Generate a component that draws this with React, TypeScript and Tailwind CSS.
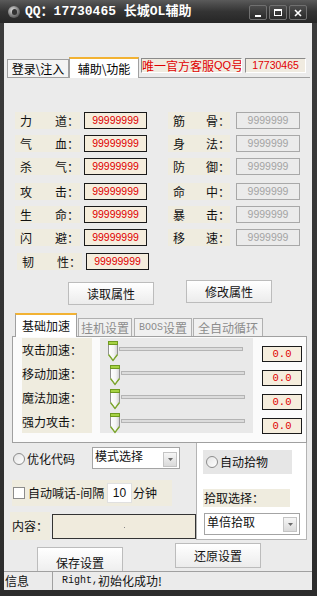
import React from "react";

const CJK = "font-['Noto_Sans_CJK_SC',sans-serif]";
const NUM = "font-['Liberation_Sans',sans-serif]";
const MONO = "font-['Liberation_Mono','Noto_Sans_CJK_SC',monospace]";

function WinBtn({ children }: { children: React.ReactNode }) {
  return (
    <div className="w-[18px] h-[15px] rounded-[2px] border border-[#707070] bg-linear-to-b from-[#4c4c4c] to-[#2a2a2a] flex items-center justify-center">
      {children}
    </div>
  );
}

const leftRows = [
  { a: "力", b: "道", cls: "" },
  { a: "气", b: "血", cls: "mt-[6px]" },
  { a: "杀", b: "气", cls: "mt-[6px]" },
  { a: "攻", b: "击", cls: "mt-[8px]" },
  { a: "生", b: "命", cls: "mt-[6px]" },
  { a: "闪", b: "避", cls: "mt-[6px]" },
  { a: "韧", b: "性", cls: "mt-[7px] ml-[2px]" },
];
const rightRows = [
  { a: "筋", b: "骨", cls: "" },
  { a: "身", b: "法", cls: "mt-[6px]" },
  { a: "防", b: "御", cls: "mt-[6px]" },
  { a: "命", b: "中", cls: "mt-[8px]" },
  { a: "暴", b: "击", cls: "mt-[6px]" },
  { a: "移", b: "速", cls: "mt-[6px]" },
];

function Thumb() {
  return (
    <svg width="12" height="22" viewBox="0 0 12 22" className="shrink-0">
      <defs>
        <linearGradient id="thf" x1="0" x2="1" y1="0" y2="0">
          <stop offset="0" stopColor="#ffffff" />
          <stop offset="0.6" stopColor="#f4f4f4" />
          <stop offset="1" stopColor="#cfcfcf" />
        </linearGradient>
      </defs>
      <path d="M1.5 1.5 H10.5 V14.5 L6 20.5 L1.5 14.5 Z" fill="url(#thf)" stroke="#909090" />
      <path d="M1.5 14.5 L6 20.5 L10.5 14.5" fill="none" stroke="#7da82c" strokeWidth="1.3" />
      <rect x="1.5" y="1.5" width="9" height="3" fill="#a6d243" stroke="#6f9a20" />
    </svg>
  );
}

function Arrow() {
  return (
    <div className="w-[14px] h-[15px] border border-[#c4c4c4] bg-linear-to-b from-[#f6f6f6] to-[#dadada] flex items-center justify-center">
      <svg width="5" height="3" viewBox="0 0 5 3">
        <path d="M0 0 H5 L2.5 3 Z" fill="#6a6a6a" />
      </svg>
    </div>
  );
}

function Radio() {
  return (
    <div className="w-[12px] h-[12px] rounded-full border border-[#8c8c8c] bg-linear-to-br from-[#e4e4e4] to-white shrink-0" />
  );
}

function Button({ text, cls }: { text: string; cls: string }) {
  return (
    <div
      className={`${cls} w-[86px] border border-[#bcbcbc] bg-linear-to-b from-white to-[#ececec] flex items-center justify-center text-[12px] text-[#111] ${CJK}`}
    >
      {text}
    </div>
  );
}

export default function App() {
  return (
    <div className={`w-[317px] h-[596px] bg-linear-to-b from-[#3c3c3c] to-[#2c2c2c] flex flex-col overflow-hidden ${CJK}`}>
      {/* title bar */}
      <div className="h-[23px] flex items-center pl-[8px] pr-[10px] bg-linear-to-b from-[#5a5a5a] via-[#343434] to-[#262626] shrink-0">
        <div className="w-[12px] h-[12px] rounded-full bg-[radial-gradient(circle_at_40%_35%,#e0e0e0,#8a8a8a_45%,#2a2a2a)] flex items-center justify-center">
          <div className="w-[5px] h-[6px] rounded-full bg-[#333]" />
        </div>
        <span className={`ml-[5px] text-white font-bold text-[13px] leading-none whitespace-nowrap ${MONO}`}>
          QQ：17730465 长城OL辅助
        </span>
        <div className="ml-auto flex gap-[2px] mt-[2px]">
          <WinBtn>
            <div className="w-[6px] h-[2px] bg-white mt-[6px]" />
          </WinBtn>
          <WinBtn>
            <div className="w-[8px] h-[7px] border border-white border-t-2" />
          </WinBtn>
          <WinBtn>
            <svg width="8" height="8" viewBox="0 0 8 8">
              <path d="M1 1 L7 7 M7 1 L1 7" stroke="white" strokeWidth="1.6" />
            </svg>
          </WinBtn>
        </div>
      </div>

      {/* body */}
      <div className="ml-[4px] w-[308px] h-[567px] bg-[#ebebeb] flex flex-col pt-[34px] shrink-0">
        {/* tabs */}
        <div className="h-[20px] flex items-end ml-[3px] text-[12px] leading-none">
          <div className="w-[62px] h-[18px] border border-b-0 border-[#a0a0a0] bg-[#f4f4f4] flex items-center justify-center">
            登录\注入
          </div>
          <div className="relative z-10 -mb-px w-[70px] h-[21px] border-x border-[#a0a0a0] border-t-2 border-t-[#f2b233] bg-white flex items-center justify-center">
            辅助\功能
          </div>
          <div className="self-start mt-[1px] ml-[2px] w-[101px] h-[15px] border border-t-[#8a8a8a] border-l-[#8a8a8a] border-b-white border-r-white bg-[#f0ebe0] text-[#e00000] flex items-center whitespace-nowrap overflow-hidden">
            唯一官方客服<span className={`text-[11px] ${NUM}`}>QQ</span>号
          </div>
          <div className={`self-start mt-[1px] ml-[3px] w-[61px] h-[15px] border border-t-[#8a8a8a] border-l-[#8a8a8a] border-b-white border-r-white bg-[#f0ebe0] text-[#e00000] text-[10.5px] flex items-center justify-center ${NUM}`}>
            17730465
          </div>
        </div>

        {/* main panel */}
        <div className="ml-[3px] w-[303px] h-[494px] border-t border-[#a0a0a0] flex flex-col">
          {/* attributes */}
          <div className="mt-[34px] h-[158px] flex">
            <div className="ml-[8px] w-[153px] flex flex-col">
              {leftRows.map((r, i) => (
                <div key={i} className={`${r.cls} flex items-center h-[17px]`}>
                  <div className="w-[65px] h-[17px] bg-[#efecdf] flex items-center text-[12px] leading-none text-[#111]">
                    <span className="w-[40px] pl-[5px]">{r.a}</span>
                    <span>{r.b}</span>
                    <span>：</span>
                  </div>
                  <div className={`ml-[4px] w-[63px] h-[17px] border border-[#1a1a1a] bg-[#f5eddd] text-[#e00000] text-[10.5px] leading-none flex items-center justify-center ${NUM}`}>
                    99999999
                  </div>
                </div>
              ))}
            </div>
            <div className="w-[140px] flex flex-col">
              {rightRows.map((r, i) => (
                <div key={i} className={`${r.cls} flex items-center h-[17px]`}>
                  <div className="w-[62px] h-[17px] bg-[#efecdf] flex items-center text-[12px] leading-none text-[#111]">
                    <span className="w-[40px] pl-[5px]">{r.a}</span>
                    <span>{r.b}</span>
                    <span>：</span>
                  </div>
                  <div className={`ml-[6px] w-[64px] h-[17px] border border-[#a8a8a8] bg-[#ebebeb] text-[#a4a4a4] text-[10.5px] leading-none flex items-center justify-center ${NUM}`}>
                    9999999
                  </div>
                </div>
              ))}
            </div>
          </div>

          {/* buttons */}
          <div className="mt-[10px] h-[25px] flex items-start">
            <Button text="读取属性" cls="ml-[61px] mt-[2px] h-[23px] w-[80px]" />
            <Button text="修改属性" cls="ml-[32px] h-[23px] w-[80px]" />
          </div>

          {/* sub tabs */}
          <div className="mt-[8px] h-[23px] ml-[8px] flex items-end text-[12px] leading-none">
            <div className="relative z-10 -mb-px w-[62px] h-[24px] border-x border-[#a0a0a0] border-t-2 border-t-[#f2b233] bg-white flex items-center justify-center text-[#111]">
              基础加速
            </div>
            <div className="ml-[1px] w-[54px] h-[18px] border border-b-0 border-[#b0b0b0] bg-[#f0f0f0] flex items-center justify-center text-[#8c8c8c]">
              挂机设置
            </div>
            <div className="ml-[2px] w-[58px] h-[18px] border border-b-0 border-[#b0b0b0] bg-[#f0f0f0] flex items-center justify-center text-[#8c8c8c]">
              <span className={`text-[10px] ${MONO}`}>BOOS</span>设置
            </div>
            <div className="ml-[1px] w-[70px] h-[18px] border border-b-0 border-[#b0b0b0] bg-[#f0f0f0] flex items-center justify-center text-[#8c8c8c]">
              全自动循环
            </div>
          </div>

          {/* sub panel */}
          <div className="ml-[5px] w-[295px] h-[107px] border border-[#a0a0a0] bg-[#fbfbfb] pt-[1px] flex">
            <div className="ml-[9px] w-[70px] h-[95px] bg-[#efecdf] flex flex-col pt-[4px] gap-[8px] text-[12px] leading-[16px] text-[#111]">
              {["攻击加速：", "移动加速：", "魔法加速：", "强力攻击："].map((t) => (
                <div key={t} className="h-[16px]">{t}</div>
              ))}
            </div>
            <div className="ml-[8px] w-[153px] h-[95px] bg-[#e9e9e9] flex flex-col pt-[2px] gap-[2px]">
              {[0, 1, 2, 3].map((i) => (
                <div key={i} className={`h-[22px] flex items-start ${i === 0 ? "ml-[7px]" : "ml-[9px]"}`}>
                  <Thumb />
                  <div className="mt-[7px] h-[4px] w-[124px] border border-[#b4b4b4] bg-[#dcdcdc]" />
                </div>
              ))}
            </div>
            <div className="ml-[9px] w-[40px] flex flex-col pt-[8px] gap-[8px]">
              {[0, 1, 2, 3].map((i) => (
                <div key={i} className={`h-[16px] border border-[#1a1a1a] bg-[#f5eddd] text-[#e00000] text-[10.5px] leading-none flex items-center justify-center ${MONO}`}>
                  0.0
                </div>
              ))}
            </div>
          </div>

          {/* bottom */}
          <div className="h-[97px] flex">
            <div className="w-[189px] flex flex-col text-[12px] leading-none text-[#111]">
              <div className="mt-[4px] h-[22px] flex items-center">
                <div className="ml-[6px] w-[79px] flex items-center mt-[2px]">
                  <Radio />
                  <span className="ml-[2px]">优化代码</span>
                </div>
                <div className="w-[88px] h-[22px] border border-[#a4a4a4] bg-white flex items-start">
                  <span className="ml-[2px] mt-[2px]">模式选择</span>
                  <div className="ml-auto mr-[2px] mt-[4px]">
                    <Arrow />
                  </div>
                </div>
              </div>
              <div className="mt-[11px] ml-[5px] w-[160px] h-[26px] bg-[#efecdf] flex items-center">
                <div className="ml-[1px] w-[12px] h-[12px] border border-[#8c8c8c] bg-white" />
                <span className="ml-[3px] w-[79px]">自动喊话-间隔</span>
                <div className={`w-[25px] h-[20px] bg-white border border-[#e0e0e0] flex items-center justify-center text-[12px] ${NUM}`}>
                  10
                </div>
                <span className="ml-[1px]">分钟</span>
              </div>
              <div className="mt-[6px] h-[28px] flex items-center">
                <div className="ml-[3px] w-[40px] h-[28px] bg-[#efecdf] flex items-center pl-[2px]">内容：</div>
                <div className="ml-[2px] w-[144px] h-[25px] border border-[#333] bg-[#f0ebdd] flex items-center justify-center">
                  <div className="w-[1px] h-[1px] bg-[#888] mt-[3px]" />
                </div>
              </div>
            </div>
            <div className="w-[111px] h-[97px] border border-t-0 border-[#b4b4b4] bg-white flex flex-col text-[12px] leading-none text-[#111]">
              <div className="mt-[7px] ml-[6px] w-[89px] h-[24px] bg-[#e6e6e6] flex items-center">
                <div className="ml-[3px]">
                  <Radio />
                </div>
                <span className="ml-[2px]">自动拾物</span>
              </div>
              <div className="mt-[15px] ml-[6px] w-[87px] h-[18px] bg-[#efecdf] flex items-center pl-[1px]">
                拾取选择：
              </div>
              <div className="mt-[6px] ml-[7px] w-[96px] h-[22px] border border-[#a4a4a4] bg-white flex items-start">
                <span className="ml-[2px] mt-[2px]">单倍拾取</span>
                <div className="ml-auto mr-[2px] mt-[3px]">
                  <Arrow />
                </div>
              </div>
            </div>
          </div>

          {/* action buttons */}
          <div className="h-[31px] overflow-hidden flex items-start">
            <Button text="保存设置" cls="ml-[30px] mt-[7px] h-[28px] items-end pb-[2px]" />
            <Button text="还原设置" cls="ml-[52px] mt-[3px] h-[25px]" />
          </div>
        </div>

        {/* status bar */}
        <div className="h-[19px] border-t border-[#a0a0a0] flex items-center text-[12px] leading-none text-[#111]">
          <div className="w-[49px] h-full border-r border-[#a0a0a0] flex items-center pl-[1px]">信息</div>
          <div className="pl-[9px] flex items-center">
            <span className={`text-[10px] ${MONO}`}>Right,</span>
            <span>初始化成功!</span>
          </div>
        </div>
      </div>
    </div>
  );
}
